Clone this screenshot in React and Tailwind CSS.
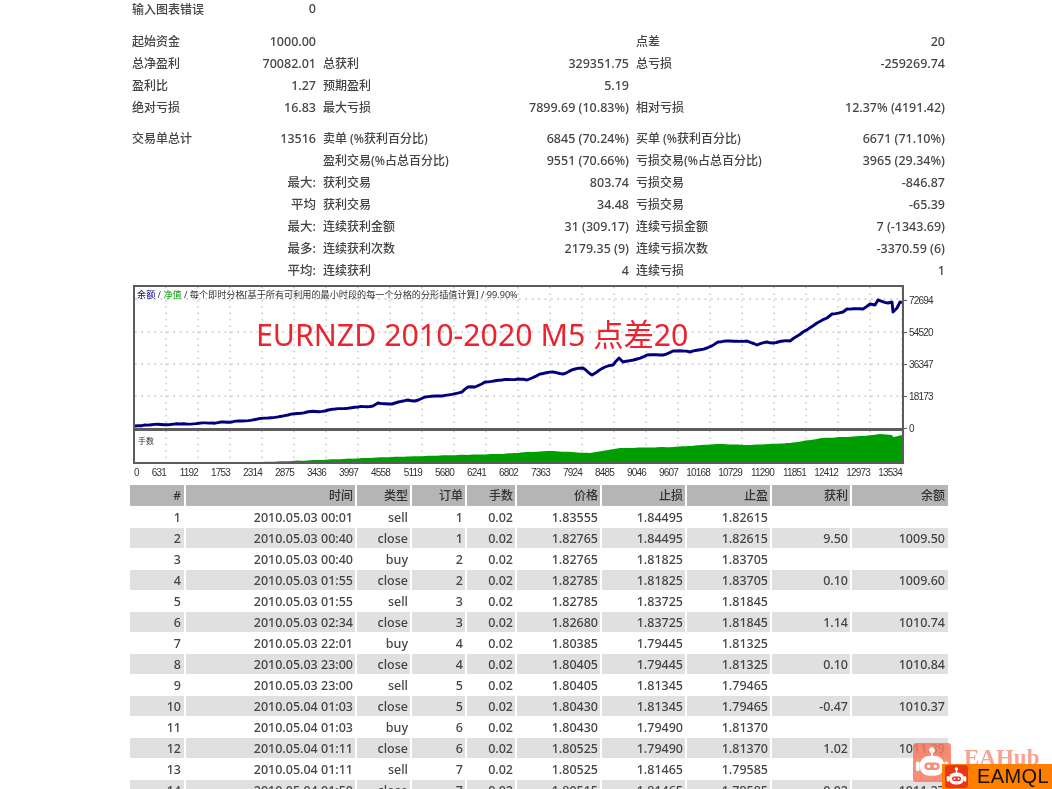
const statGroups = [
  { className: "h-[19px]", rows: [[["输入图表错误", "0"]]] },
  {
    className: "mt-[12px]",
    rows: [
      [["起始资金", "1000.00"], ["", ""], ["点差", "20"]],
      [["总净盈利", "70082.01"], ["总获利", "329351.75"], ["总亏损", "-259269.74"]],
      [["盈利比", "1.27"], ["预期盈利", "5.19"], ["", ""]],
      [["绝对亏损", "16.83"], ["最大亏损", "7899.69 (10.83%)"], ["相对亏损", "12.37% (4191.42)"]],
    ],
  },
  {
    className: "mt-[9px]",
    rows: [
      [["交易单总计", "13516"], ["卖单 (%获利百分比)", "6845 (70.24%)"], ["买单 (%获利百分比)", "6671 (71.10%)"]],
      [["", ""], ["盈利交易(%占总百分比)", "9551 (70.66%)"], ["亏损交易(%占总百分比)", "3965 (29.34%)"]],
      [["", "最大:"], ["获利交易", "803.74"], ["亏损交易", "-846.87"]],
      [["", "平均"], ["获利交易", "34.48"], ["亏损交易", "-65.39"]],
      [["", "最大:"], ["连续获利金额", "31 (309.17)"], ["连续亏损金额", "7 (-1343.69)"]],
      [["", "最多:"], ["连续获利次数", "2179.35 (9)"], ["连续亏损次数", "-3370.59 (6)"]],
      [["", "平均:"], ["连续获利", "4"], ["连续亏损", "1"]],
    ],
  },
];

const equityKnots = [
  [135, 426], [145, 425], [180, 424], [212, 423], [242, 421], [268, 418], [288, 415], [307, 412],
  [325, 411], [335, 409], [358, 407], [373, 406], [378, 403], [392, 404], [408, 400], [415, 401],
  [425, 397], [442, 396], [462, 392], [468, 387], [475, 387], [485, 382], [502, 380], [518, 379],
  [527, 380], [532, 378], [540, 374], [553, 372], [563, 374], [575, 369], [583, 368], [592, 375],
  [605, 367], [613, 365], [619, 358], [623, 362], [637, 359], [647, 355], [663, 355], [673, 351],
  [683, 351], [690, 352], [707, 348], [718, 342], [730, 341], [747, 341], [757, 345], [767, 342],
  [773, 343], [783, 341], [790, 341], [803, 332], [817, 323], [827, 318], [832, 314], [843, 312],
  [847, 309], [863, 309], [870, 304], [875, 305], [878, 300], [888, 303], [892, 302], [893, 312],
  [897, 308], [900, 302], [902, 303],
];

const volumeKnots = [
  [262, 462], [292, 461], [392, 457], [458, 455], [500, 454], [530, 452], [550, 451], [590, 453],
  [620, 448], [673, 447], [717, 444], [750, 445], [790, 443], [823, 438], [863, 436], [880, 434],
  [892, 435], [893, 437], [902, 435],
];

// adds a little fixed wobble between knots so the line is not too clean
function roughen(knots, amount) {
  const out = [];
  knots.forEach(([x, y], i) => {
    out.push(`${x},${y}`);
    const next = knots[i + 1];
    if (!next || next[0] - x < 4) return;
    const steps = Math.floor((next[0] - x) / 3);
    for (let s = 1; s < steps; s++) {
      const t = s / steps;
      const px = x + (next[0] - x) * t;
      const py = y + (next[1] - y) * t + Math.sin(px * 1.7) * amount;
      out.push(`${px.toFixed(1)},${py.toFixed(1)}`);
    }
  });
  return out.join(" ");
}

const equity = roughen(equityKnots, 0.4);
const volume = `${roughen(volumeKnots, 0.15)} 902,462 262,462`;

const gridX = Array.from({ length: 24 }, (_, i) => 166 + i * 32);
const gridY = [299, 332, 364, 396];
const axisRight = ["72694", "54520", "36347", "18173", "0"];
const axisBottom = Array.from({ length: 24 }, (_, i) => String(631 + i * 561));

const trades = [
  ["1", "2010.05.03 00:01", "sell", "1", "1.83555", "1.84495", "1.82615", "", ""],
  ["2", "2010.05.03 00:40", "close", "1", "1.82765", "1.84495", "1.82615", "9.50", "1009.50"],
  ["3", "2010.05.03 00:40", "buy", "2", "1.82765", "1.81825", "1.83705", "", ""],
  ["4", "2010.05.03 01:55", "close", "2", "1.82785", "1.81825", "1.83705", "0.10", "1009.60"],
  ["5", "2010.05.03 01:55", "sell", "3", "1.82785", "1.83725", "1.81845", "", ""],
  ["6", "2010.05.03 02:34", "close", "3", "1.82680", "1.83725", "1.81845", "1.14", "1010.74"],
  ["7", "2010.05.03 22:01", "buy", "4", "1.80385", "1.79445", "1.81325", "", ""],
  ["8", "2010.05.03 23:00", "close", "4", "1.80405", "1.79445", "1.81325", "0.10", "1010.84"],
  ["9", "2010.05.03 23:00", "sell", "5", "1.80405", "1.81345", "1.79465", "", ""],
  ["10", "2010.05.04 01:03", "close", "5", "1.80430", "1.81345", "1.79465", "-0.47", "1010.37"],
  ["11", "2010.05.04 01:03", "buy", "6", "1.80430", "1.79490", "1.81370", "", ""],
  ["12", "2010.05.04 01:11", "close", "6", "1.80525", "1.79490", "1.81370", "1.02", "1011.39"],
  ["13", "2010.05.04 01:11", "sell", "7", "1.80525", "1.81465", "1.79585", "", ""],
  ["14", "2010.05.04 01:50", "close", "7", "1.80515", "1.81465", "1.79585", "0.02", "1011.37"],
];

const tableGrid =
  "grid grid-cols-[54px_169px_53px_53px_48px_83px_83px_83px_78px_96px] gap-x-[2px] w-[818px]";

function StatCell({ label, value }) {
  return (
    <div className="flex justify-between items-center">
      <span className="text-[12px] font-medium">{label}</span>
      <span className="text-[12.5px] font-medium">{value}</span>
    </div>
  );
}

function Stats() {
  return (
    <div className="flex flex-col pl-[132px]">
      {statGroups.map((group, g) => (
        <div key={g} className={group.className}>
          {group.rows.map((row, r) => (
            <div
              key={r}
              className={`grid grid-cols-[184px_306px_309px] gap-x-[7px] ${g === 0 ? "h-[19px]" : "h-[22px]"}`}
            >
              {row.map((cell, c) => (
                <StatCell key={c} label={cell[0]} value={cell[1]} />
              ))}
            </div>
          ))}
        </div>
      ))}
    </div>
  );
}

function DotGrid({ ys, y1, y2 }) {
  return (
    <g stroke="#c4c4c4" strokeWidth="1.4" strokeDasharray="1.6 4.8">
      {gridX.map((x) => (
        <line key={x} x1={x} x2={x} y1={y1} y2={y2} />
      ))}
      {ys.map((y) => (
        <line key={y} x1="135" x2="902" y1={y} y2={y} />
      ))}
    </g>
  );
}

function Chart() {
  return (
    <div className="mt-[3px] ml-[133px]">
      <div className="flex">
        <div className="relative w-[771px] border-2 border-[#5c5c5c] bg-white">
          <svg className="block w-[767px] h-[141px]" viewBox="135 287 767 141">
            <DotGrid ys={gridY} y1="287" y2="428" />
            <polyline
              points={equity}
              fill="none"
              stroke="#00007e"
              strokeWidth="2.9"
              strokeLinejoin="round"
            />
          </svg>
          <div className="h-[3px] bg-[#5c5c5c]" />
          <svg className="block w-[767px] h-[31px]" viewBox="135 431 767 31">
            <DotGrid ys={[]} y1="431" y2="462" />
            <polygon points={volume} fill="#009e00" />
          </svg>
          <div className="absolute left-[2px] top-[2px] text-[9.15px] leading-[12px] text-[#333] whitespace-nowrap">
            <span className="text-[#00007e]">余额</span> / <span className="text-[#00a000]">净值</span> / 每个即时分格[基于所有可利用的最小时段的每一个分格的分形插值计算] / 99.90%
          </div>
          <div className="absolute left-[3px] top-[148px] text-[8px] leading-[12px] text-[#333]">手数</div>
          <div className="absolute left-[121px] top-[30px] text-[30.3px] leading-[36px] text-[#e8252e] whitespace-nowrap">
            EURNZD 2010-2020 M5 点差20
          </div>
        </div>
        <div className="flex flex-col -mt-px">
          {axisRight.map((label) => (
            <div key={label} className="h-[32px] flex items-center gap-[2px]">
              <span className="w-[3px] h-px bg-[#5c5c5c]" />
              <span className="text-[10px] tracking-[-0.8px] font-['Liberation_Sans',sans-serif] text-[#333]">{label}</span>
            </div>
          ))}
        </div>
      </div>
      <div className="grid grid-cols-[repeat(24,32px)] w-[768px] h-[16px] items-center pl-[1px] text-[10px] tracking-[-0.8px] font-['Liberation_Sans',sans-serif] text-[#333]">
        {axisBottom.map((label, i) => (
          <div key={label} className={i === 0 ? "flex justify-between" : "text-right"}>
            {i === 0 && <span>0</span>}
            <span>{label}</span>
          </div>
        ))}
      </div>
    </div>
  );
}

function TradesTable() {
  const heads = ["#", "时间", "类型", "订单", "手数", "价格", "止损", "止盈", "获利", "余额"];
  return (
    <div className="mt-[5px] ml-[130px] flex flex-col">
      <div className={`${tableGrid} h-[21px] mb-px`}>
        {heads.map((h, c) => (
          <div
            key={h}
            className={`bg-[#b5b5b5] text-right text-[12px] font-medium leading-[21px] text-[#333] ${c === 0 || c === 9 ? "pr-[3px]" : "pr-[2px]"}`}
          >
            {h}
          </div>
        ))}
      </div>
      {trades.map((row, r) => (
        <div key={r} className={`${tableGrid} h-[21px]`}>
          {[row[0], row[1], row[2], row[3], "0.02", ...row.slice(4)].map((cell, c) => (
            <div
              key={c}
              className={`text-right text-[12.5px] font-medium leading-[21px] h-[20px] ${c === 0 || c === 9 ? "pr-[3px]" : "pr-[2px]"} ${r % 2 === 1 ? "bg-[#e0e0e0]" : ""}`}
            >
              {cell}
            </div>
          ))}
        </div>
      ))}
    </div>
  );
}

function RobotIcon({ className, face, body }) {
  return (
    <svg className={className} viewBox="0 0 40 40">
      <circle cx="20" cy="7" r="3" fill={body} />
      <rect x="19" y="8" width="2" height="6" fill={body} />
      <rect x="3" y="19" width="4" height="10" rx="2" fill={body} />
      <rect x="33" y="19" width="4" height="10" rx="2" fill={body} />
      <rect x="7" y="13" width="26" height="21" rx="10" fill={body} />
      <rect x="12" y="20" width="16" height="8" rx="4" fill={face} />
      <circle cx="16.5" cy="24" r="1.8" fill={body} />
      <circle cx="23.5" cy="24" r="1.8" fill={body} />
    </svg>
  );
}

export default function App() {
  return (
    <div className="relative w-[1052px] h-[789px] overflow-hidden bg-white text-[#444] font-['Noto_Sans','Noto_Sans_CJK_SC',sans-serif]">
      <div className="blur-[0.45px]">
        <Stats />
        <Chart />
        <TradesTable />
      </div>
      {/* watermarks over the table */}
      <div className="absolute left-[913px] top-[743px] w-[38px] h-[39px] rounded-[3px] bg-[#f87a60] opacity-85 blur-[0.4px]">
        <RobotIcon className="w-full h-full" face="#f87a60" body="#fff" />
      </div>
      <div className="absolute left-[964px] top-[745px] text-[23px] leading-[26px] font-bold text-[#f8a391] font-['Liberation_Serif',serif] blur-[0.4px]">
        EAHub
      </div>
      <div className="absolute left-[942px] top-[764px] w-[110px] h-[25px] bg-[#ff8000] flex items-center blur-[0.3px]">
        <div className="ml-[3px] w-[23px] h-[23px] rounded-[3px] bg-[#ee3416]">
          <RobotIcon className="w-full h-full" face="#ee3416" body="#fff" />
        </div>
        <span className="ml-[9px] text-[20px] leading-[25px] font-medium tracking-[0.4px] text-[#161006] font-['Liberation_Sans',sans-serif]">
          EAMQL
        </span>
      </div>
    </div>
  );
}
